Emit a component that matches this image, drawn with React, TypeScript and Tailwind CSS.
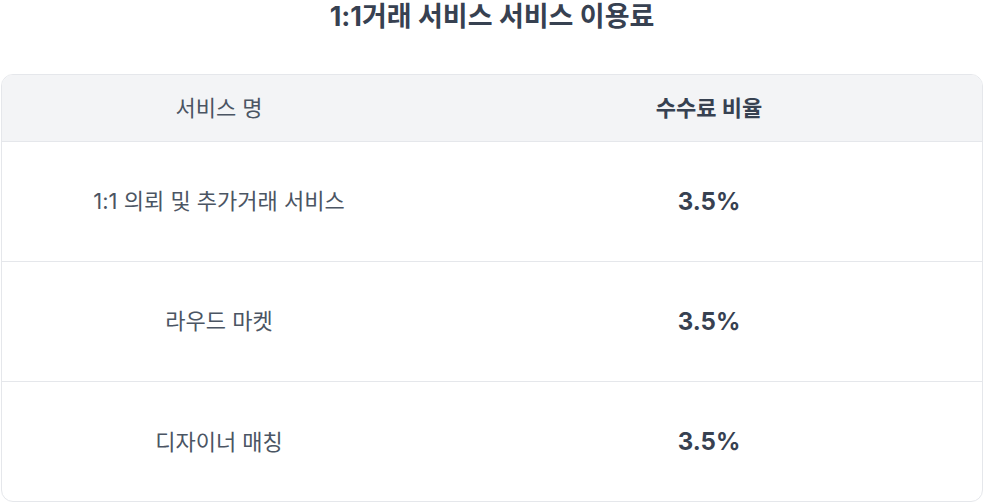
import React from "react";

const rows = [
  { name: "1:1 의뢰 및 추가거래 서비스", rate: "3.5%" },
  { name: "라우드 마켓", rate: "3.5%" },
  { name: "디자이너 매칭", rate: "3.5%" },
];

const App: React.FC = () => {
  return (
    <div
      className="w-[984px] h-[502px] bg-white text-[#374151]"
      style={{ fontFamily: 'Inter, "Noto Sans CJK KR", "Noto Sans", sans-serif' }}
    >
      <h1 className="h-[74px] text-center text-[27px] font-bold leading-[34px]">
        1:1거래 서비스 서비스 이용료
      </h1>

      <div className="mx-[1px] h-[428px] rounded-xl border border-[#e5e7eb] overflow-hidden">
        {/* 헤더 */}
        <div className="grid h-[67px] grid-cols-[434px_1fr] items-center bg-[#f3f4f6] border-b border-[#e5e7eb] text-[22px]">
          <div className="text-center text-[#4b5563]">서비스 명</div>
          <div className="text-center font-bold">수수료 비율</div>
        </div>

        {rows.map((row, i) => (
          <div
            key={i}
            className={
              "grid h-[120px] grid-cols-[434px_1fr] items-center " +
              (i < rows.length - 1 ? "border-b border-[#e5e7eb]" : "")
            }
          >
            <div className="text-center text-[22px] text-[#4b5563]">{row.name}</div>
            <div className="text-center text-[24px] font-bold">{row.rate}</div>
          </div>
        ))}
      </div>
    </div>
  );
};

export default App;
